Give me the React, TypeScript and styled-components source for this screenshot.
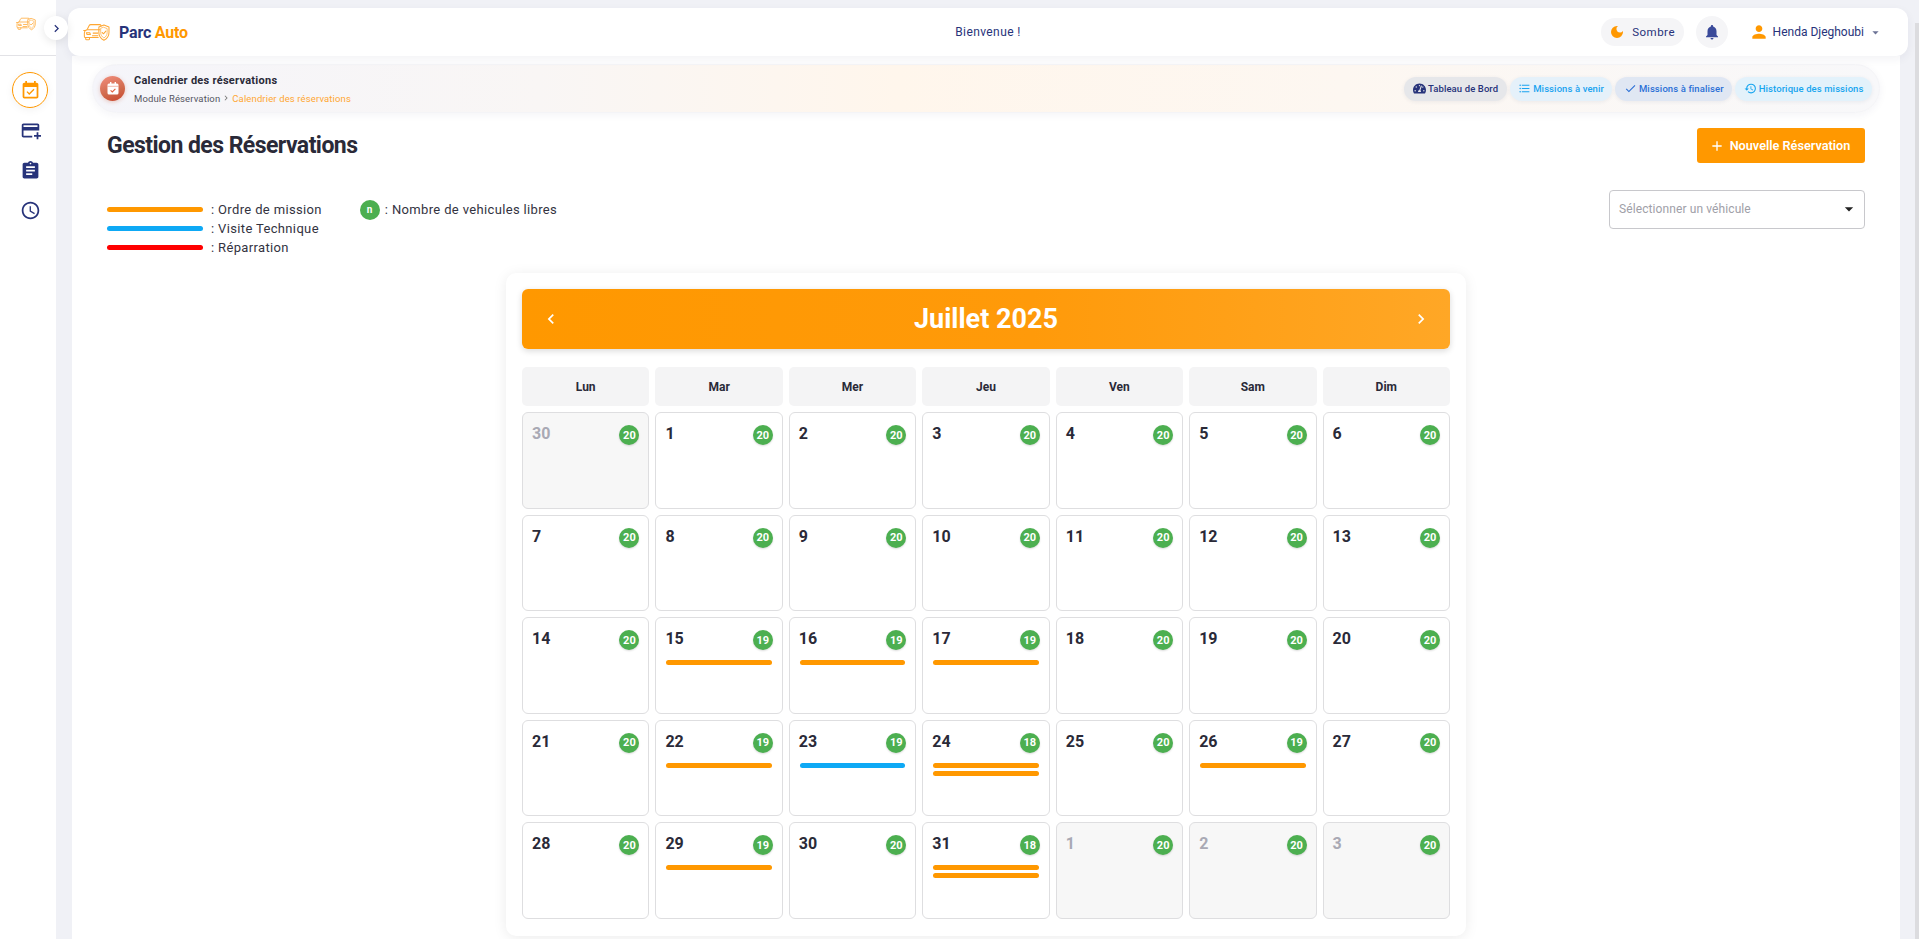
import React from "react";
import styled, { createGlobalStyle } from "styled-components";
import {
  MdAccessTime,
  MdAdd,
  MdAddCard,
  MdArrowDropDown,
  MdAssignment,
  MdCheck,
  MdChevronLeft,
  MdChevronRight,
  MdDarkMode,
  MdEventAvailable,
  MdFormatListBulleted,
  MdHistory,
  MdNotifications,
  MdPerson,
} from "react-icons/md";
import { FaTachometerAlt } from "react-icons/fa";

const orange = "#ff9800";
const navy = "#27337a";
const ink = "#2a2a38";

const GlobalStyle = createGlobalStyle`
  html, body {
    margin: 0;
    padding: 0;
    height: 100%;
    overflow: hidden;
    font-family: Roboto, "Liberation Sans", sans-serif;
    color: ${ink};
  }
  * {
    box-sizing: border-box;
  }
`;

const Shell = styled.div`
  display: flex;
  height: 939px;
  background: #f0f1f6;
  overflow: hidden;
`;

const Sidebar = styled.aside`
  position: relative;
  flex: 0 0 56px;
  background: #fff;
  z-index: 2;
`;

const SidebarHead = styled.div`
  height: 56px;
  display: flex;
  align-items: center;
  padding: 0 0 8px 16px;
  border-bottom: 1px solid #e2e2e6;
`;

const Toggle = styled.button`
  position: absolute;
  top: 16px;
  left: 44px;
  width: 24px;
  height: 24px;
  padding: 0;
  border: 0;
  border-radius: 50%;
  background: #fff;
  color: ${navy};
  display: flex;
  align-items: center;
  justify-content: center;
  font-size: 15px;
  box-shadow: 0 2px 10px rgba(0, 0, 0, 0.1);
`;

const Nav = styled.nav`
  display: flex;
  flex-direction: column;
  align-items: center;
  gap: 4px;
  padding: 16px 0 0 4px;
`;

const NavItem = styled.div<{ $active?: boolean }>`
  width: 36px;
  height: 36px;
  border-radius: 50%;
  display: flex;
  align-items: center;
  justify-content: center;
  font-size: 21px;
  color: ${(props) => (props.$active ? orange : navy)};
  border: ${(props) => (props.$active ? `1px solid ${orange}` : "0")};
  box-shadow: ${(props) => (props.$active ? "0 2px 8px rgba(0, 0, 0, 0.05)" : "none")};
`;

const Content = styled.div`
  flex: 1;
  min-width: 0;
  display: flex;
  flex-direction: column;
`;

const ScrollTrack = styled.div`
  flex: 0 0 4px;
  padding-top: 23px;
`;

const ScrollThumb = styled.div`
  height: 100%;
  background: #dcdcdf;
`;

const Topbar = styled.header`
  position: relative;
  z-index: 1;
  flex: 0 0 48px;
  margin: 8px 7px 0 12px;
  padding: 0 15px;
  background: #fff;
  border-radius: 12px;
  display: grid;
  grid-template-columns: 1fr 100px 1fr;
  align-items: center;
  box-shadow: 0 3px 10px rgba(30, 40, 90, 0.06);
`;

const Brand = styled.div`
  display: flex;
  align-items: center;
  gap: 9px;
`;

const BrandName = styled.div`
  font-size: 16px;
  font-weight: 700;
  color: ${navy};
  letter-spacing: -0.2px;
  span {
    color: ${orange};
  }
`;

const Welcome = styled.div`
  font-size: 12px;
  font-weight: 400;
  letter-spacing: 0.4px;
  color: ${navy};
  text-align: center;
`;

const TopActions = styled.div`
  display: flex;
  align-items: center;
  justify-content: flex-end;
  padding-right: 14px;
`;

const ThemePill = styled.div`
  width: 83px;
  height: 28px;
  border-radius: 14px;
  background: #f5f5f7;
  display: flex;
  align-items: center;
  justify-content: center;
  gap: 7px;
  font-size: 11.5px;
  font-weight: 400;
  letter-spacing: 0.5px;
  color: ${navy};
  svg {
    font-size: 16px;
    color: ${orange};
  }
`;

const BellButton = styled.div`
  width: 32px;
  height: 32px;
  margin-left: 12px;
  border-radius: 50%;
  background: #f5f5f7;
  display: flex;
  align-items: center;
  justify-content: center;
  color: #3a4a9a;
  font-size: 18px;
`;

const UserMenu = styled.div`
  margin-left: 21px;
  display: flex;
  align-items: center;
  font-size: 12px;
  font-weight: 400;
  color: ${navy};
`;

const UserIcon = styled(MdPerson)`
  font-size: 20px;
  color: ${orange};
  margin-right: 4px;
`;

const UserCaret = styled(MdArrowDropDown)`
  font-size: 15px;
  margin-left: 4px;
  margin-right: -4px;
  color: #6c7396;
`;

const Panel = styled.main`
  flex: 1;
  min-height: 0;
  margin: 0 15px 0 16px;
  background: #fff;
  padding: 8px 20px 0;
  overflow: hidden;
`;

const Breadcrumb = styled.section`
  height: 49px;
  padding: 0 7px;
  border-radius: 25px;
  display: flex;
  align-items: center;
  justify-content: space-between;
  background: linear-gradient(90deg, #f5f5fa 0%, #f9f6f5 25%, #fff6ec 45%, #fdf7f1 70%, #f8f8fa 100%);
  border: 1px solid #f4f4f7;
  box-shadow: 0 2px 8px rgba(30, 40, 90, 0.05);
`;

const BreadLeft = styled.div`
  display: flex;
  align-items: center;
  gap: 9px;
`;

const BreadIcon = styled.div`
  width: 25px;
  height: 25px;
  border-radius: 50%;
  display: flex;
  align-items: center;
  justify-content: center;
  background: linear-gradient(160deg, #f28e7e 0%, #d06a4c 60%, #c9452c 100%);
  box-shadow: 0 1px 4px rgba(200, 90, 60, 0.3);
`;

const BreadTitle = styled.div`
  font-size: 11px;
  font-weight: 700;
  letter-spacing: 0.27px;
  color: ${ink};
  margin-bottom: 6px;
`;

const Trail = styled.div`
  display: flex;
  align-items: center;
  font-size: 9.5px;
  letter-spacing: 0.13px;
  color: #555562;
  svg {
    font-size: 10px;
    margin: 0 1px;
    color: #777;
  }
  span {
    color: #ffa733;
  }
`;

const Pills = styled.div`
  display: flex;
  gap: 3px;
`;

const Pill = styled.div<{ $bg: string; $fg: string }>`
  height: 24px;
  padding: 0 8.5px;
  border-radius: 12px;
  display: flex;
  align-items: center;
  gap: 2px;
  font-size: 9.5px;
  font-weight: 500;
  letter-spacing: 0.1px;
  background: ${(props) => props.$bg};
  color: ${(props) => props.$fg};
  box-shadow: 0 1px 4px rgba(30, 40, 90, 0.07);
  svg {
    font-size: 13px;
  }
`;

const Body = styled.div`
  padding: 0 15px;
`;

const TitleRow = styled.div`
  margin-top: 15px;
  display: flex;
  align-items: center;
  justify-content: space-between;
`;

const PageTitle = styled.h1`
  margin: 0;
  font-size: 23px;
  font-weight: 700;
  letter-spacing: -0.55px;
  color: ${ink};
`;

const NewButton = styled.button`
  height: 35px;
  width: 168px;
  padding: 0 3px 0 0;
  border: 0;
  border-radius: 3px;
  background: ${orange};
  color: #fff;
  font-family: inherit;
  font-size: 12.7px;
  font-weight: 600;
  display: flex;
  align-items: center;
  justify-content: center;
  gap: 5px;
  svg {
    font-size: 16px;
  }
`;

const FilterRow = styled.div`
  margin-top: 27px;
  display: flex;
  justify-content: space-between;
  align-items: flex-start;
`;

const Legends = styled.div`
  display: flex;
  gap: 38px;
  padding-top: 10px;
`;

const LegendList = styled.div`
  display: flex;
  flex-direction: column;
`;

const LegendRow = styled.div`
  height: 19px;
  display: flex;
  align-items: center;
  gap: 8px;
  font-size: 13px;
  letter-spacing: 0.35px;
  color: #33333f;
`;

const LegendBar = styled.div<{ $color: string }>`
  width: 96px;
  height: 5px;
  border-radius: 3px;
  background: ${(props) => props.$color};
`;

const LegendCount = styled.div`
  height: 19px;
  display: flex;
  align-items: center;
  gap: 5px;
  font-size: 13px;
  letter-spacing: 0.35px;
  color: #33333f;
`;

const CountDot = styled.div`
  width: 20px;
  height: 20px;
  border-radius: 50%;
  background: #4caf50;
  color: #fff;
  font-size: 10px;
  font-weight: 700;
  display: flex;
  align-items: center;
  justify-content: center;
`;

const VehicleSelect = styled.div`
  width: 256px;
  height: 39px;
  border: 1px solid #c8c8cc;
  border-radius: 4px;
  padding: 0 5px 2px 9px;
  display: flex;
  align-items: center;
  justify-content: space-between;
  font-size: 12px;
  letter-spacing: 0.1px;
  color: #a0a0a8;
  svg {
    font-size: 20px;
    color: #222;
  }
`;

const CalendarCard = styled.section`
  width: 960px;
  margin: 16px auto 0;
  padding: 16px 16px 17px;
  border-radius: 10px;
  background: #fff;
  box-shadow: 0 2px 14px rgba(0, 0, 0, 0.08);
`;

const MonthBar = styled.div`
  height: 60px;
  padding: 0 19px;
  border-radius: 6px;
  background: linear-gradient(90deg, #ff9800 0%, #ff9a0a 55%, #ffa726 100%);
  color: #fff;
  display: flex;
  align-items: center;
  justify-content: space-between;
  box-shadow: 0 2px 6px rgba(0, 0, 0, 0.15);
  svg {
    font-size: 20px;
  }
`;

const MonthTitle = styled.div`
  font-size: 27px;
  font-weight: 700;
`;

const Weekdays = styled.div`
  margin-top: 18px;
  display: grid;
  grid-template-columns: repeat(7, 1fr);
  gap: 6px;
`;

const Weekday = styled.div`
  height: 39px;
  border-radius: 5px;
  background: #f4f4f5;
  font-size: 12px;
  font-weight: 700;
  color: ${ink};
  display: flex;
  align-items: center;
  justify-content: center;
`;

const DayGrid = styled.div`
  margin-top: 6px;
  display: grid;
  grid-template-columns: repeat(7, 1fr);
  grid-auto-rows: 96.5px;
  gap: 6px;
`;

const DayCell = styled.div<{ $muted?: boolean }>`
  padding: 12px 9px 0 9px;
  border: 1px solid #dedee0;
  border-radius: 6px;
  background: ${(props) => (props.$muted ? "#f7f7f7" : "#fff")};
`;

const DayTop = styled.div`
  height: 30px;
  display: flex;
  justify-content: space-between;
  align-items: flex-start;
`;

const DayNumber = styled.div<{ $muted?: boolean }>`
  font-size: 16px;
  font-weight: 700;
  line-height: 18px;
  color: ${(props) => (props.$muted ? "#a9a9b4" : ink)};
`;

const FreeBadge = styled.div`
  width: 20px;
  height: 20px;
  border-radius: 50%;
  background: #4caf50;
  color: #fff;
  font-size: 11px;
  font-weight: 700;
  display: flex;
  align-items: center;
  justify-content: center;
  box-shadow: 0 1px 2px rgba(0, 0, 0, 0.15);
`;

const EventList = styled.div`
  display: flex;
  flex-direction: column;
  gap: 3px;
  margin: 0 1px;
`;

const EventBar = styled.div<{ $color: string }>`
  height: 5px;
  border-radius: 3px;
  background: ${(props) => props.$color};
`;

const BrandMark: React.FC<{ width: number }> = ({ width }) => (
  <svg width={width} viewBox="0 0 40 28" fill="none" stroke="#ffa733" strokeWidth="1.5" strokeLinecap="round" strokeLinejoin="round">
    <path d="M1 11h3l2-1 3-6c.5-1 1.4-1.6 2.5-1.6h13c1 0 2 .6 2.5 1.6" />
    <path d="M7 10h18" />
    <path d="M4.5 10.5C2.5 11.500 2 13 2 15v5c0 1 .6 1.600 1.600 1.600h19" />
    <path d="M4 21.600v2c0 .8.5 1.300 1.300 1.300h3c.8 0 1.300-.5 1.300-1.300v-2" />
    <path d="M5 14.500h5l1 2.500H6z" />
    <path d="M14 19h8M15 15h7" />
    <path d="M31 3l7.500 2.800v8.200c0 5.500-3.400 9.400-7.500 11.500-4.100-2.100-7.500-6-7.500-11.500V5.800z" />
    <path d="M31 6.500l4.800 1.800v5.900c0 3.700-2.100 6.400-4.800 8-2.700-1.600-4.800-4.300-4.800-8V8.300z" strokeWidth="1" />
    <path d="M28.300 14l2 2 3.600-4" />
  </svg>
);

const CalendarBadgeIcon = () => (
  <svg width="12" height="13" viewBox="0 0 12 13">
    <rect x="3" y="0" width="1.400" height="3" fill="#fff" />
    <rect x="7.600" y="0" width="1.400" height="3" fill="#fff" />
    <rect x="0.500" y="1.500" width="11" height="11" rx="1.500" fill="#fff" />
    <path d="M0.500 4.300h11" stroke="#e58a73" strokeWidth="0.6" />
    <path d="M3.600 8.300l1.700 1.600 3.100-3" fill="none" stroke="#e2603f" strokeWidth="1.100" />
  </svg>
);

type DayData = {
  day: number;
  free: number;
  muted?: boolean;
  events?: string[];
};

const blue = "#0ea9f5";
const red = "#ff0000";

const makeDays = (): DayData[] => {
  const days: DayData[] = [{ day: 30, free: 20, muted: true }];
  const special: Record<number, DayData> = {
    15: { day: 15, free: 19, events: [orange] },
    16: { day: 16, free: 19, events: [orange] },
    17: { day: 17, free: 19, events: [orange] },
    22: { day: 22, free: 19, events: [orange] },
    23: { day: 23, free: 19, events: [blue] },
    24: { day: 24, free: 18, events: [orange, orange] },
    26: { day: 26, free: 19, events: [orange] },
    29: { day: 29, free: 19, events: [orange] },
    31: { day: 31, free: 18, events: [orange, orange] },
  };
  for (let d = 1; d <= 31; d++) {
    days.push(special[d] || { day: d, free: 20 });
  }
  [1, 2, 3].forEach((d) => days.push({ day: d, free: 20, muted: true }));
  return days;
};

const weekdays = ["Lun", "Mar", "Mer", "Jeu", "Ven", "Sam", "Dim"];

export default function App() {
  return (
    <>
      <GlobalStyle />
      <Shell>
        <Sidebar>
          <SidebarHead>
            <BrandMark width={20} />
          </SidebarHead>
          <Toggle>
            <MdChevronRight />
          </Toggle>
          <Nav>
            <NavItem $active>
              <MdEventAvailable />
            </NavItem>
            <NavItem>
              <MdAddCard />
            </NavItem>
            <NavItem>
              <MdAssignment />
            </NavItem>
            <NavItem>
              <MdAccessTime />
            </NavItem>
          </Nav>
        </Sidebar>
        <Content>
          <Topbar>
            <Brand>
              <BrandMark width={27} />
              <BrandName>
                Parc <span>Auto</span>
              </BrandName>
            </Brand>
            <Welcome>Bienvenue !</Welcome>
            <TopActions>
              <ThemePill>
                <MdDarkMode />
                Sombre
              </ThemePill>
              <BellButton>
                <MdNotifications />
              </BellButton>
              <UserMenu>
                <UserIcon />
                Henda Djeghoubi
                <UserCaret />
              </UserMenu>
            </TopActions>
          </Topbar>
          <Panel>
            <Breadcrumb>
              <BreadLeft>
                <BreadIcon>
                  <CalendarBadgeIcon />
                </BreadIcon>
                <div>
                  <BreadTitle>Calendrier des réservations</BreadTitle>
                  <Trail>
                    Module Réservation
                    <MdChevronRight />
                    <span>Calendrier des réservations</span>
                  </Trail>
                </div>
              </BreadLeft>
              <Pills>
                <Pill $bg="#e6e7ea" $fg={navy}>
                  <FaTachometerAlt />
                  Tableau de Bord
                </Pill>
                <Pill $bg="#e5f1fa" $fg="#1aa3f0">
                  <MdFormatListBulleted />
                  Missions à venir
                </Pill>
                <Pill $bg="#e0e7f3" $fg="#2a6fd6">
                  <MdCheck />
                  Missions à finaliser
                </Pill>
                <Pill $bg="#e3f2fb" $fg="#17a5ef">
                  <MdHistory />
                  Historique des missions
                </Pill>
              </Pills>
            </Breadcrumb>
            <Body>
              <TitleRow>
                <PageTitle>Gestion des Réservations</PageTitle>
                <NewButton>
                  <MdAdd />
                  Nouvelle Réservation
                </NewButton>
              </TitleRow>
              <FilterRow>
                <Legends>
                  <LegendList>
                    <LegendRow>
                      <LegendBar $color={orange} />: Ordre de mission
                    </LegendRow>
                    <LegendRow>
                      <LegendBar $color={blue} />: Visite Technique
                    </LegendRow>
                    <LegendRow>
                      <LegendBar $color={red} />: Réparration
                    </LegendRow>
                  </LegendList>
                  <LegendCount>
                    <CountDot>n</CountDot>: Nombre de vehicules libres
                  </LegendCount>
                </Legends>
                <VehicleSelect>
                  Sélectionner un véhicule
                  <MdArrowDropDown />
                </VehicleSelect>
              </FilterRow>
              <CalendarCard>
                <MonthBar>
                  <MdChevronLeft />
                  <MonthTitle>Juillet 2025</MonthTitle>
                  <MdChevronRight />
                </MonthBar>
                <Weekdays>
                  {weekdays.map((name) => (
                    <Weekday key={name}>{name}</Weekday>
                  ))}
                </Weekdays>
                <DayGrid>
                  {makeDays().map((item, i) => (
                    <DayCell key={i} $muted={item.muted}>
                      <DayTop>
                        <DayNumber $muted={item.muted}>{item.day}</DayNumber>
                        <FreeBadge>{item.free}</FreeBadge>
                      </DayTop>
                      {item.events && (
                        <EventList>
                          {item.events.map((color, j) => (
                            <EventBar key={j} $color={color} />
                          ))}
                        </EventList>
                      )}
                    </DayCell>
                  ))}
                </DayGrid>
              </CalendarCard>
            </Body>
          </Panel>
        </Content>
        <ScrollTrack>
          <ScrollThumb />
        </ScrollTrack>
      </Shell>
    </>
  );
}
